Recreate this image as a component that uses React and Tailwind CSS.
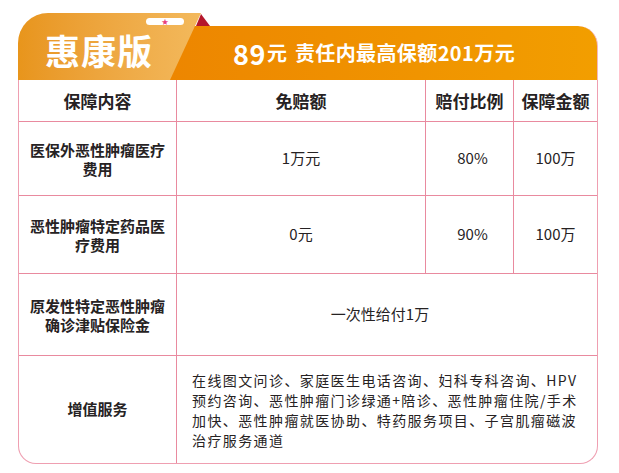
import React from "react";

const F = { fontFamily: '"Noto Sans CJK SC", "Noto Sans", sans-serif' };

export default function App() {
  const cell = "flex items-center justify-center text-center border-[#e98a9f]";
  return (
    <div className="w-[619px] h-[473px] bg-white pt-[13px] pl-[18px]" style={F}>
      <div className="w-[580px]">
        {/* Header */}
        <div className="relative flex items-end h-[67px]">
          <div
            className="relative z-10 w-[183px] h-[67px] shrink-0 rounded-tl-[30px] bg-gradient-to-r from-[#e8951b] to-[#f3b95c] flex items-center pl-[27px]"
            style={{ clipPath: "polygon(0 0, 183px 0, 152px 67px, 0 67px)" }}
          >
            <span className="text-white font-bold text-[35px] leading-none tracking-[1px] mt-[5px]">惠康版</span>
            <div className="absolute left-[128px] top-[5px] w-[38px] h-[7px] rounded-full bg-white flex items-center justify-center">
              <span className="text-[#e8407a] text-[7px] leading-none">★</span>
            </div>
          </div>
          <div className="-ml-[31px] flex-1 h-[54px] rounded-tr-[20px] bg-gradient-to-r from-[#ed8600] to-[#f29e00] flex items-center pl-[63px] text-white font-bold border-r border-[#f3b6c2]">
            <span className="text-[27px] leading-none tracking-[0.5px]">89</span>
            <span className="text-[20px] leading-none ml-[1px]">元</span>
            <span className="text-[20px] leading-none ml-[8px] tracking-[0.4px]">责任内最高保额201万元</span>
          </div>
          <div
            className="absolute z-20 left-[178px] top-[1px] w-[14px] h-[12px] bg-[#b5172b]"
            style={{ clipPath: "polygon(36% 0, 100% 100%, 0 100%)" }}
          />
        </div>
        {/* Table */}
        <div className="border-l border-r border-b border-[#ef9fb1] rounded-b-[18px] overflow-hidden text-[#262223]">
          <div className="grid grid-cols-[158px_249px_88px_83px] grid-rows-[42px_74px_78px_82px_107px]">
            <div className={`${cell} border-r border-b font-bold text-[17px]`}>保障内容</div>
            <div className={`${cell} border-r border-b font-bold text-[17px]`}>免赔额</div>
            <div className={`${cell} border-r border-b font-bold text-[17px]`}>赔付比例</div>
            <div className={`${cell} border-b font-bold text-[17px]`}>保障金额</div>

            <div className={`${cell} border-r border-b font-bold text-[15px] leading-[19px] px-[10px]`}>医保外恶性肿瘤医疗<br />费用</div>
            <div className={`${cell} border-r border-b text-[15px]`}>1万元</div>
            <div className={`${cell} border-r border-b text-[15px] pl-[6px]`}>80%</div>
            <div className={`${cell} border-b text-[15px]`}>100万</div>

            <div className={`${cell} border-r border-b font-bold text-[15px] leading-[19px] px-[10px]`}>恶性肿瘤特定药品医<br />疗费用</div>
            <div className={`${cell} border-r border-b text-[15px]`}>0元</div>
            <div className={`${cell} border-r border-b text-[15px] pl-[6px]`}>90%</div>
            <div className={`${cell} border-b text-[15px]`}>100万</div>

            <div className={`${cell} border-r border-b font-bold text-[15px] leading-[19px] px-[10px]`}>原发性特定恶性肿瘤<br />确诊津贴保险金</div>
            <div className={`${cell} col-span-3 border-b text-[15px] pr-[14px]`}>一次性给付1万</div>

            <div className={`${cell} border-r font-bold text-[15px]`}>增值服务</div>
            <div className="col-span-3 flex items-center pl-[15px] text-[14px] leading-[20px] tracking-[1.4px] text-[#262223]">
              <div>
                在线图文问诊、家庭医生电话咨询、妇科专科咨询、HPV<br />
                预约咨询、恶性肿瘤门诊绿通+陪诊、恶性肿瘤住院/手术<br />
                加快、恶性肿瘤就医协助、特药服务项目、子宫肌瘤磁波<br />
                治疗服务通道
              </div>
            </div>
          </div>
        </div>
      </div>
    </div>
  );
}
